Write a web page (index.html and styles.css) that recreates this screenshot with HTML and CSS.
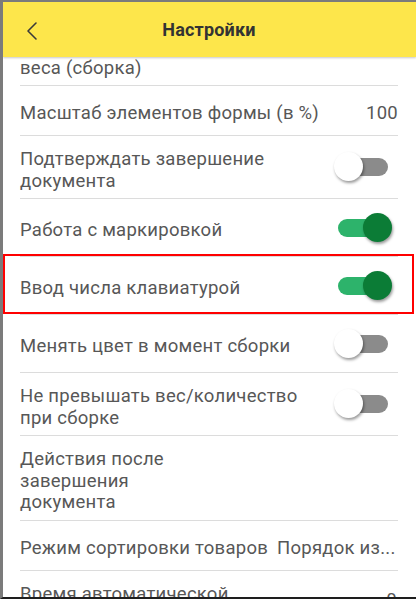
FILE: index.html
```html
<!DOCTYPE html>
<html lang="ru">
<head>
<meta charset="utf-8">
<title>Настройки</title>
<link rel="stylesheet" href="styles.css">
</head>
<body>
<div class="frame">
  <header class="appbar">
    <span class="back">
      <svg width="14" height="20" viewBox="0 0 14 20"><path d="M11 2 L3 10 L11 18" fill="none" stroke="#3a3a3a" stroke-width="1.6" stroke-linecap="round" stroke-linejoin="round"/></svg>
    </span>
    <h1 class="title">Настройки</h1>
  </header>
  <main class="list">
    <div class="row row-partial"><span class="label">веса (сборка)</span></div>
    <div class="row"><span class="label">Масштаб элементов формы (в %)</span><span class="value">100</span></div>
    <div class="row row-toggle"><span class="label">Подтверждать завершение<br>документа</span><span class="toggle"><span class="track"></span><span class="knob"></span></span></div>
    <div class="row row-toggle"><span class="label">Работа с маркировкой</span><span class="toggle on"><span class="track"></span><span class="knob"></span></span></div>
    <div class="row row-toggle highlighted"><span class="label">Ввод числа клавиатурой</span><span class="toggle on"><span class="track"></span><span class="knob"></span></span><span class="redbox"></span></div>
    <div class="row row-toggle"><span class="label">Менять цвет в момент сборки</span><span class="toggle"><span class="track"></span><span class="knob"></span></span></div>
    <div class="row row-toggle"><span class="label">Не превышать вес/количество<br>при сборке</span><span class="toggle"><span class="track"></span><span class="knob"></span></span></div>
    <div class="row"><span class="label">Действия после<br>завершения<br>документа</span></div>
    <div class="row"><span class="label">Режим сортировки товаров</span><span class="value value-sort">Порядок из...</span></div>
    <div class="row row-last"><span class="label">Время автоматической<br>блокировки</span><span class="value value-last">0</span></div>
  </main>
</div>
</body>
</html>
```
FILE: styles.css
```css
html, body {
  margin: 0;
  padding: 0;
  background: #ffffff;
}
body {
  font-family: Roboto, "Noto Sans", "Liberation Sans", sans-serif;
  width: 416px;
  height: 599px;
  overflow: hidden;
}
.frame {
  position: relative;
  box-sizing: border-box;
  width: 416px;
  height: 599px;
  border-top: 2px solid #7b7b7b;
  border-left: 3px solid #7b7b7b;
  border-bottom: 2px solid #1e1e1e;
  overflow: hidden;
  background: #fff;
}
.appbar {
  position: relative;
  z-index: 2;
  height: 55px;
  background: #fde64b;
  display: flex;
  align-items: center;
  justify-content: center;
  box-shadow: 0 1px 2px rgba(0,0,0,0.22);
}
.back {
  position: absolute;
  left: 22px;
  top: 19px;
  width: 14px;
  height: 20px;
  display: flex;
}
.title {
  margin: 0 0 0 -1px;
  font-size: 18px;
  font-weight: 700;
  color: #333333;
  letter-spacing: 0.2px;
}
.list {
  padding: 0 18px 0 17px;
}
.row {
  position: relative;
  display: flex;
  align-items: center;
  min-height: 50px;
  padding: 13px 0 6px;
  box-sizing: border-box;
  border-bottom: 1px solid #dcdcdc;
  font-size: 18.5px;
  line-height: 21.5px;
  letter-spacing: 0.25px;
  color: #575757;
}
.row-partial {
  min-height: 0;
  height: 29px;
  padding: 1px 0 0;
  align-items: flex-start;
}
.row-toggle {
  min-height: 58px;
}
.label {
  flex: 0 1 auto;
}
.value {
  margin-left: auto;
  white-space: nowrap;
}
.value-sort {
  margin-left: 9px;
}
.value-last {
  margin-right: 1px;
  align-self: flex-start;
  margin-top: 6px;
}
.toggle {
  position: relative;
  margin-left: auto;
  margin-right: 6px;
  margin-top: -7px;
  width: 58px;
  height: 30px;
  flex: 0 0 auto;
}
.track {
  position: absolute;
  left: 4px;
  top: 6px;
  width: 50px;
  height: 18px;
  border-radius: 9px;
  background: #8b8b8b;
}
.knob {
  position: absolute;
  left: 0;
  top: 0;
  width: 29px;
  height: 29px;
  border-radius: 50%;
  background: #ffffff;
  box-shadow: 1px 2px 3px rgba(0,0,0,0.4);
}
.toggle.on .track {
  background: #2db36b;
}
.toggle.on .knob {
  left: 29px;
  background: #0b7c36;
}
.redbox {
  position: absolute;
  left: -17px;
  right: -16px;
  top: -3px;
  bottom: 0;
  border: 2px solid #ff0000;
  pointer-events: none;
}
```
